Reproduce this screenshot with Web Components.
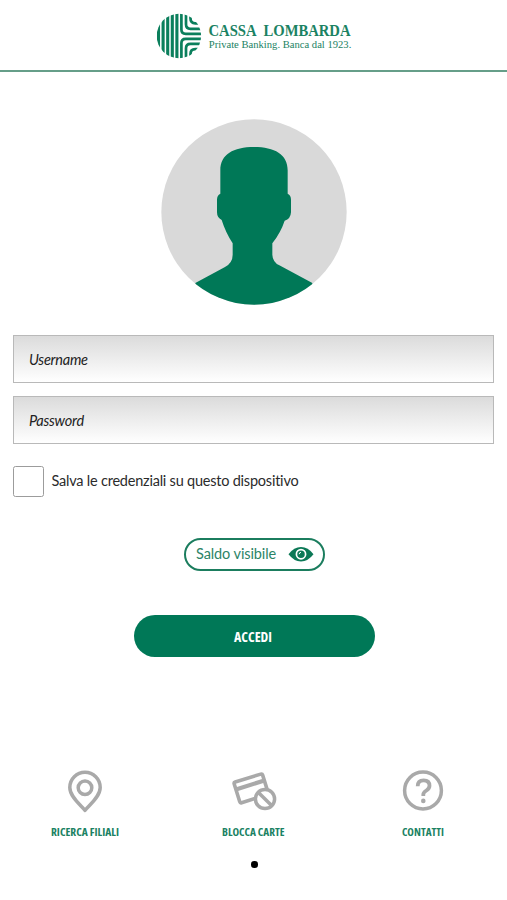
<!DOCTYPE html>
<html lang="it">
<head>
<meta charset="utf-8">
<meta name="viewport" content="width=device-width, initial-scale=1">
<title>Cassa Lombarda</title>
<style>
  body {
    margin: 0;
    background: #fff;
    font-family: Lato, "Liberation Sans", sans-serif;
    font-variant-ligatures: none;
  }
</style>
</head>
<body>
<login-page></login-page>
<script>
class BankHeader extends HTMLElement {
  constructor() {
    super();
    this.attachShadow({ mode: "open" });
  }

  static get styles() {
    return /* css */`
      :host {
        display: flex;
        justify-content: center;
        box-sizing: border-box;
        height: 71.5px;
        padding: 10px 0 0 2px;
        border-bottom: 2px solid #669e89;
      }
      svg {
        display: block;
        overflow: visible;
      }
      .mark {
        fill: none;
        stroke: #0b7f5c;
        stroke-width: 3.1;
      }
      .mark .bends {
        stroke-width: 2.7;
      }
      text {
        font-family: "Liberation Serif", serif;
        fill: #1b8263;
      }
      .name {
        font-size: 17px;
        font-weight: bold;
      }
      .claim {
        font-size: 11px;
      }
    `;
  }

  connectedCallback() {
    this.shadowRoot.innerHTML = /* html */`
    <style>${BankHeader.styles}</style>
    <svg width="247" height="52" viewBox="131 10 247 52">
      <clipPath id="disc"><circle cx="178.9" cy="36" r="22.2"/></clipPath>
      <g class="mark" clip-path="url(#disc)">
        <path d="M158.5 10V62M163.1 10V62M167.7 10V62M172.3 10V62M176.9 10V62"/>
        <g class="bends">
          <path d="M181.4 10V29.5Q181.4 33.8 185.7 33.8H203M186 10V24.3Q186 28.8 190.5 28.8H203M190.5 10V18.5Q190.5 23.3 195.3 23.3H203"/>
          <path d="M181.4 62V43.1Q181.4 38.8 185.7 38.8H203M186 62V48.3Q186 43.8 190.5 43.8H203M190.5 62V53.9Q190.5 49.1 195.3 49.1H203"/>
        </g>
      </g>
      <text class="name" x="208.5" y="35.8" textLength="48" lengthAdjust="spacingAndGlyphs">CASSA</text>
      <text class="name" x="263.5" y="35.8" textLength="87" lengthAdjust="spacingAndGlyphs">LOMBARDA</text>
      <text class="claim" x="208.8" y="48.3" textLength="142.5" lengthAdjust="spacingAndGlyphs">Private Banking. Banca dal 1923.</text>
    </svg>`;
  }
}

class UserAvatar extends HTMLElement {
  constructor() {
    super();
    this.attachShadow({ mode: "open" });
  }

  connectedCallback() {
    this.shadowRoot.innerHTML = /* html */`
    <style>
      :host { display: block; width: 186px; height: 186px; }
      svg { display: block; }
    </style>
    <svg width="186" height="186" viewBox="33 26 558 558">
      <clipPath id="round"><circle cx="312" cy="305" r="278"/></clipPath>
      <circle cx="312" cy="305" r="278" fill="#d9d9d9"/>
      <path clip-path="url(#round)" fill="#007857" d="M211 250V180C211 132 250 110 312 110S413 132 413 180V250Q423 255 423 268V306Q422 326 404 331Q392 367 367 399V433Q368 455 388 465L487 518V600H136V518L225 470Q248 457 248 433V399Q227 367 215 329Q201 322 201 306V268Q201 254 211 250Z"/>
    </svg>`;
  }
}

class TextField extends HTMLElement {
  constructor() {
    super();
    this.attachShadow({ mode: "open" });
  }

  static get styles() {
    return /* css */`
      :host {
        display: block;
      }
      input {
        display: block;
        box-sizing: border-box;
        width: 100%;
        height: 48px;
        margin: 0;
        padding: 1px 15px 0;
        border: 1px solid #b9b9b9;
        border-radius: 0;
        outline: none;
        background: linear-gradient(#dbdbdb, #fff);
        font: italic 14.5px Lato, sans-serif;
        letter-spacing: -0.25px;
        color: #222;
      }
      input::placeholder {
        color: #222;
        opacity: 1;
      }
    `;
  }

  connectedCallback() {
    const type = this.getAttribute("type") || "text";
    this.shadowRoot.innerHTML = /* html */`
    <style>${TextField.styles}</style>
    <input type="${type}" placeholder="${this.getAttribute("label")}">`;
  }
}

class CheckField extends HTMLElement {
  constructor() {
    super();
    this.attachShadow({ mode: "open" });
  }

  static get styles() {
    return /* css */`
      :host {
        display: block;
      }
      label {
        display: flex;
        align-items: center;
        gap: 7.5px;
        font-size: 14.5px;
        line-height: 17px;
        letter-spacing: -0.22px;
        color: #2b2b2b;
      }
      span {
        padding-bottom: 1px;
      }
      input {
        appearance: none;
        box-sizing: border-box;
        width: 31px;
        height: 31px;
        margin: 0;
        border: 1.5px solid #9c9c9c;
        border-radius: 2.5px;
        background: #fff;
      }
      input:checked {
        background: #007857;
      }
    `;
  }

  connectedCallback() {
    this.shadowRoot.innerHTML = /* html */`
    <style>${CheckField.styles}</style>
    <label><input type="checkbox"><span><slot></slot></span></label>`;
  }
}

class BalanceToggle extends HTMLElement {
  constructor() {
    super();
    this.attachShadow({ mode: "open" });
  }

  static get styles() {
    return /* css */`
      :host {
        display: block;
      }
      button {
        display: flex;
        align-items: center;
        justify-content: space-between;
        box-sizing: border-box;
        width: 141px;
        height: 33px;
        padding: 0 9px 0 10.5px;
        border: 2px solid #1b7d5e;
        border-radius: 17px;
        background: #fff;
        font: 14.5px Lato, sans-serif;
        letter-spacing: -0.1px;
        color: #2c8467;
      }
      span {
        padding-bottom: 1px;
      }
    `;
  }

  connectedCallback() {
    this.shadowRoot.innerHTML = /* html */`
    <style>${BalanceToggle.styles}</style>
    <button>
      <span><slot></slot></span>
      <svg width="26" height="16" viewBox="0 0 26 16">
        <path fill="#0b7856" d="M.5 8.2Q6 1 13 1T25.5 8.2Q20 15.4 13 15.4T.5 8.2Z"/>
        <circle cx="13" cy="8.2" r="4.6" fill="none" stroke="#fff" stroke-width="1.7"/>
        <path d="M13 6.4A1.8 1.8 0 0 0 11.2 8.2" fill="none" stroke="#fff" stroke-width="1"/>
      </svg>
    </button>`;
  }
}

// Bold condensed caption with a fixed drawn width
class CondensedText extends HTMLElement {
  constructor() {
    super();
    this.attachShadow({ mode: "open" });
  }

  connectedCallback() {
    const width = this.getAttribute("width");
    const size = this.getAttribute("size");
    this.shadowRoot.innerHTML = /* html */`
    <style>
      :host { display: block; }
      svg { display: block; overflow: visible; }
      text {
        font-family: "Open Sans", sans-serif;
        font-size: ${size}px;
        font-weight: 700;
        font-stretch: 75%;
        fill: currentColor;
      }
    </style>
    <svg width="${width}" height="16">
      <text x="0" y="13" textLength="${width}" lengthAdjust="spacingAndGlyphs">${this.getAttribute("text")}</text>
    </svg>`;
  }
}

class LoginButton extends HTMLElement {
  constructor() {
    super();
    this.attachShadow({ mode: "open" });
  }

  connectedCallback() {
    this.shadowRoot.innerHTML = /* html */`
    <style>
      :host { display: block; }
      button {
        display: flex;
        align-items: center;
        justify-content: center;
        width: 241px;
        height: 42px;
        padding: 2px 2px 0 0;
        border: 0;
        border-radius: 21px;
        background: #007857;
        color: #fff;
      }
    </style>
    <button><slot></slot></button>`;
  }
}

class QuickLink extends HTMLElement {
  constructor() {
    super();
    this.attachShadow({ mode: "open" });
  }

  static get icons() {
    return {
      pin: `<path d="M22 41.3C17 35.5 6.8 27.5 6.8 18.5A15.2 15.2 0 0 1 37.2 18.5C37.2 27.5 27 35.5 22 41.3Z"/><circle cx="22" cy="18.7" r="6.8"/>`,
      card: `<g transform="translate(19.2 19.4) rotate(-17.3)"><rect x="-14.9" y="-10.8" width="29.8" height="21.6" rx="1.5" stroke-width="3.6"/><path d="M-14.9 -3.6H14.9" stroke-width="4.2"/></g>
        <circle cx="33" cy="30" r="9.6" fill="#fff"/><path d="M26.4 23.4L39.6 36.6"/>`,
      help: `<circle cx="22" cy="21.5" r="18.4"/><path d="M16.7 17.3Q16.7 11.3 22.6 11.3T28.5 16.8Q28.5 19.5 25.4 21.5T22.3 25.5V27" stroke-width="3.8"/><circle cx="22.3" cy="31.9" r="2.3" fill="#a9a9a9" stroke="none"/>`
    };
  }

  connectedCallback() {
    this.shadowRoot.innerHTML = /* html */`
    <style>
      :host {
        display: flex;
        flex-direction: column;
        align-items: center;
        gap: 10px;
        color: #1b8263;
      }
      svg {
        display: block;
        fill: none;
        stroke: #a9a9a9;
        stroke-width: 3.5;
        stroke-linejoin: round;
      }
    </style>
    <svg width="44" height="44" viewBox="0 0 44 44" overflow="visible">${QuickLink.icons[this.getAttribute("icon")]}</svg>
    <slot></slot>`;
  }
}

class LoginPage extends HTMLElement {
  constructor() {
    super();
    this.attachShadow({ mode: "open" });
  }

  static get styles() {
    return /* css */`
      :host {
        display: flex;
        flex-direction: column;
        height: 900px;
        overflow: hidden;
      }
      main {
        display: flex;
        flex-direction: column;
        align-items: center;
        padding: 47px 13px 0;
      }
      .fields {
        display: grid;
        gap: 12.5px;
        align-self: stretch;
        margin-top: 30.5px;
      }
      check-field {
        align-self: flex-start;
        margin-top: 22px;
      }
      balance-toggle {
        margin: 41px 0 0 1px;
      }
      login-button {
        margin: 44px 0 0 1px;
      }
      nav {
        display: grid;
        grid-template-columns: repeat(3, 1fr);
        margin-top: 112px;
      }
      .dot {
        width: 6.5px;
        height: 6.5px;
        margin: 22.5px auto 0;
        border-radius: 50%;
        background: #000;
        translate: 1px 0;
      }
    `;
  }

  connectedCallback() {
    this.shadowRoot.innerHTML = /* html */`
    <style>${LoginPage.styles}</style>
    <bank-header></bank-header>
    <main>
      <user-avatar></user-avatar>
      <div class="fields">
        <text-field label="Username"></text-field>
        <text-field label="Password" type="password"></text-field>
      </div>
      <check-field>Salva le credenziali su questo dispositivo</check-field>
      <balance-toggle>Saldo visibile</balance-toggle>
      <login-button><condensed-text text="ACCEDI" width="38" size="14.5"></condensed-text></login-button>
    </main>
    <nav>
      <quick-link icon="pin"><condensed-text text="RICERCA FILIALI" width="68" size="11"></condensed-text></quick-link>
      <quick-link icon="card"><condensed-text text="BLOCCA CARTE" width="62.5" size="11"></condensed-text></quick-link>
      <quick-link icon="help"><condensed-text text="CONTATTI" width="42" size="11"></condensed-text></quick-link>
    </nav>
    <div class="dot"></div>`;
  }
}

customElements.define("bank-header", BankHeader);
customElements.define("user-avatar", UserAvatar);
customElements.define("text-field", TextField);
customElements.define("check-field", CheckField);
customElements.define("balance-toggle", BalanceToggle);
customElements.define("condensed-text", CondensedText);
customElements.define("login-button", LoginButton);
customElements.define("quick-link", QuickLink);
customElements.define("login-page", LoginPage);
</script>
</body>
</html>
